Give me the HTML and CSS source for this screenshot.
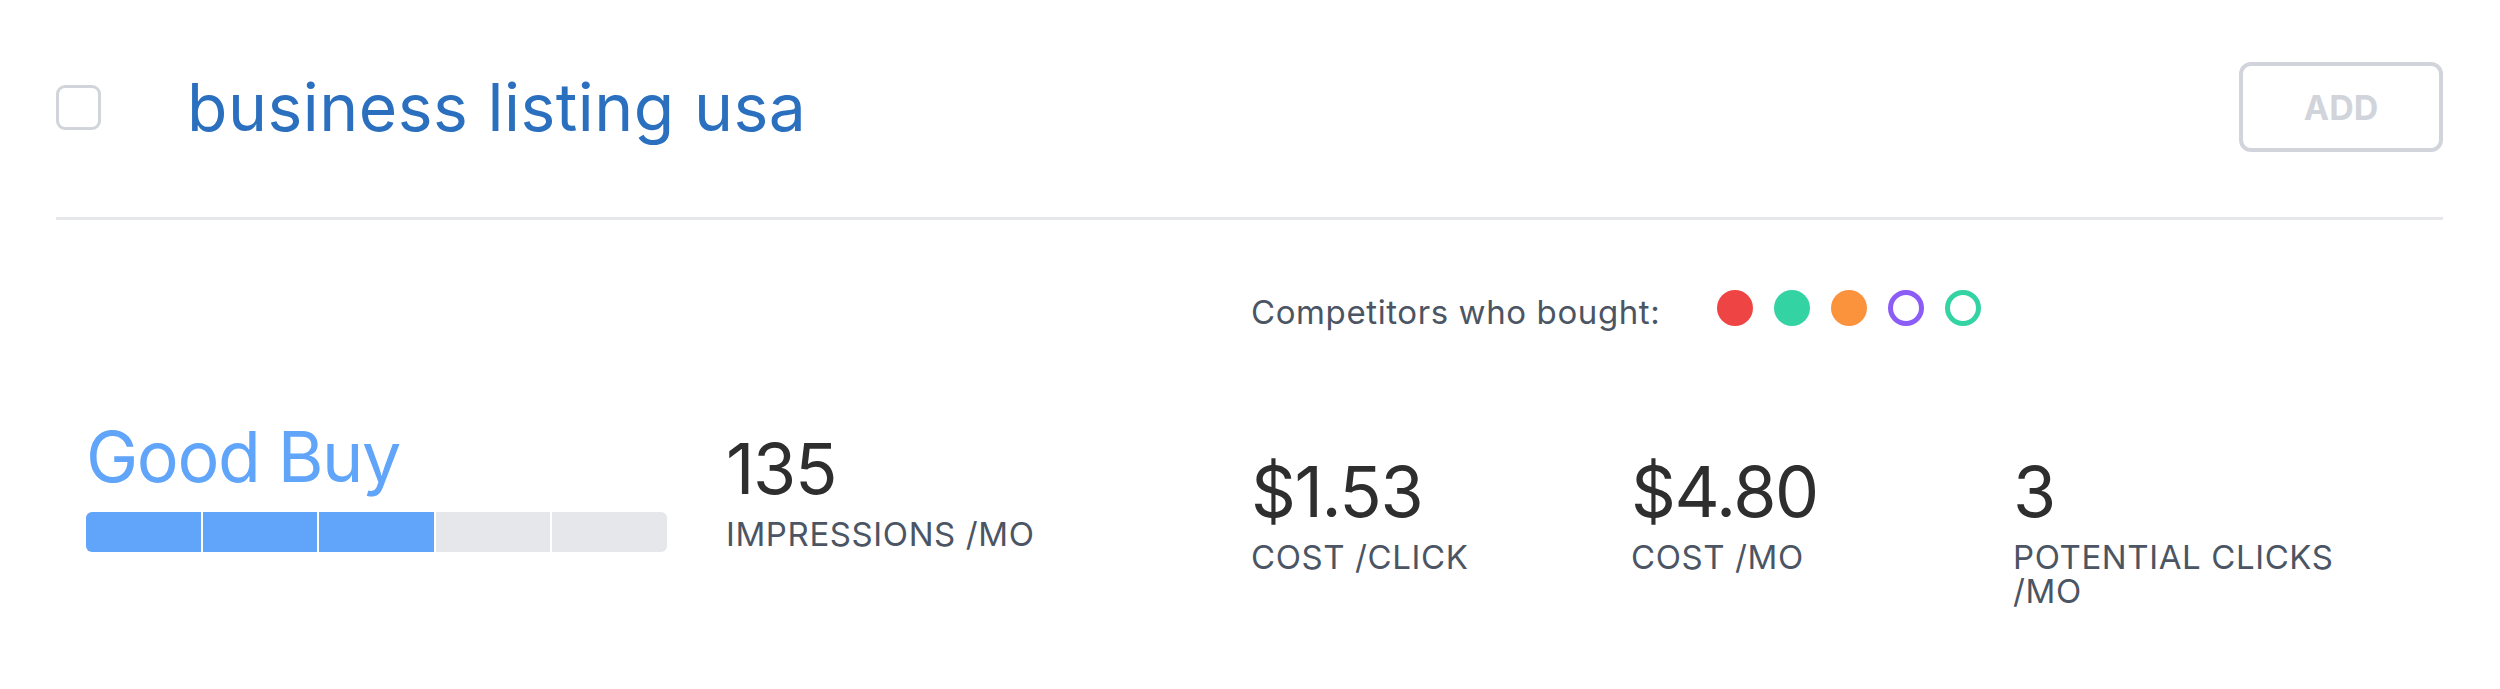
FILE: index.html
```html
<!DOCTYPE html>
<html lang="en">
<head>
<meta charset="utf-8">
<title>Keyword</title>
<link rel="stylesheet" href="styles.css">
</head>
<body>
<div class="card">
  <div class="top">
    <span class="checkbox"></span>
    <span class="title">business listing usa</span>
    <button class="add-btn">ADD</button>
  </div>
  <div class="divider"></div>
  <div class="stats">
    <div class="competitors">
      <span class="comp-label">Competitors who bought:</span>
      <span class="dots">
        <span class="dot dot-red"></span>
        <span class="dot dot-green"></span>
        <span class="dot dot-orange"></span>
        <span class="dot ring ring-purple"></span>
        <span class="dot ring ring-green"></span>
      </span>
    </div>
    <div class="rating">
      <div class="rating-text">Good Buy</div>
      <div class="bar">
        <span class="seg on"></span>
        <span class="seg on"></span>
        <span class="seg on"></span>
        <span class="seg"></span>
        <span class="seg"></span>
      </div>
    </div>
    <div class="metric metric-imp">
      <div class="value">135</div>
      <div class="label">IMPRESSIONS /MO</div>
    </div>
    <div class="metric metric-low">
      <div class="value">$1.53</div>
      <div class="label">COST /CLICK</div>
    </div>
    <div class="metric metric-low">
      <div class="value">$4.80</div>
      <div class="label">COST /MO</div>
    </div>
    <div class="metric metric-low">
      <div class="value">3</div>
      <div class="label narrow">POTENTIAL CLICKS /MO</div>
    </div>
  </div>
</div>
</body>
</html>
```
FILE: styles.css
```css
html, body {
  margin: 0;
  padding: 0;
  background: #ffffff;
}
body {
  font-family: Inter, "Noto Sans", sans-serif;
  width: 2500px;
  height: 689px;
  overflow: hidden;
}
.card {
  padding: 62px 57px 0 56px;
}
.top {
  display: flex;
  align-items: center;
  height: 90px;
}
.checkbox {
  box-sizing: border-box;
  width: 45px;
  height: 45px;
  border: 3px solid #d1d5db;
  border-radius: 9px;
  flex: none;
}
.title {
  margin-left: 86px;
  font-size: 66px;
  line-height: 1;
  color: #2b6fbf;
  font-weight: 400;
  letter-spacing: 0.5px;
}
.add-btn {
  margin-left: auto;
  box-sizing: border-box;
  width: 204px;
  height: 90px;
  border: 4px solid #d1d5db;
  border-radius: 12px;
  background: #fff;
  color: #d1d5db;
  font-family: Inter, "Noto Sans", sans-serif;
  font-weight: 700;
  font-size: 34px;
  padding: 0;
}
.divider {
  margin-top: 65px;
  height: 3px;
  background: #e5e7eb;
}
.stats {
  display: grid;
  grid-template-columns: 640px 525px 380px 382px 1fr;
  align-items: start;
  padding-left: 30px;
  margin-top: 70px;
  row-gap: 96px;
}
.competitors {
  grid-column: 3 / span 3;
  grid-row: 1;
  display: flex;
  align-items: center;
  height: 36px;
}
.comp-label {
  font-size: 33px;
  line-height: 34px;
  color: #4b5563;
  margin-top: 8px;
  letter-spacing: 0.6px;
}
.dots {
  display: flex;
  gap: 21px;
  margin-left: 57px;
}
.dot {
  box-sizing: border-box;
  width: 36px;
  height: 36px;
  border-radius: 50%;
}
.dot-red { background: #ef4444; }
.dot-green { background: #34d3a4; }
.dot-orange { background: #fb923c; }
.ring { border: 5px solid; background: #fff; }
.ring-purple { border-color: #8b5cf6; }
.ring-green { border-color: #34d3a4; }
.rating {
  grid-row: 2;
  grid-column: 1;
}
.rating-text {
  font-size: 70px;
  line-height: 70px;
  color: #60a5fa;
  letter-spacing: -1.4px;
}
.bar {
  margin-top: 20px;
  width: 581px;
  height: 40px;
  display: flex;
  gap: 2px;
  border-radius: 6px;
  overflow: hidden;
}
.seg {
  flex: 1;
  background: #e5e7eb;
}
.seg.on {
  background: #60a5fa;
}
.metric {
  grid-row: 2;
}
.metric-imp {
  margin-top: 12px;
}
.metric-low {
  margin-top: 35px;
}
.value {
  font-size: 70px;
  line-height: 70px;
  color: #2e2e2e;
  letter-spacing: -1.4px;
}
.label {
  margin-top: 13px;
  font-size: 33px;
  line-height: 34px;
  color: #4b5563;
  letter-spacing: 0.6px;
}
.narrow {
  max-width: 360px;
}
```
